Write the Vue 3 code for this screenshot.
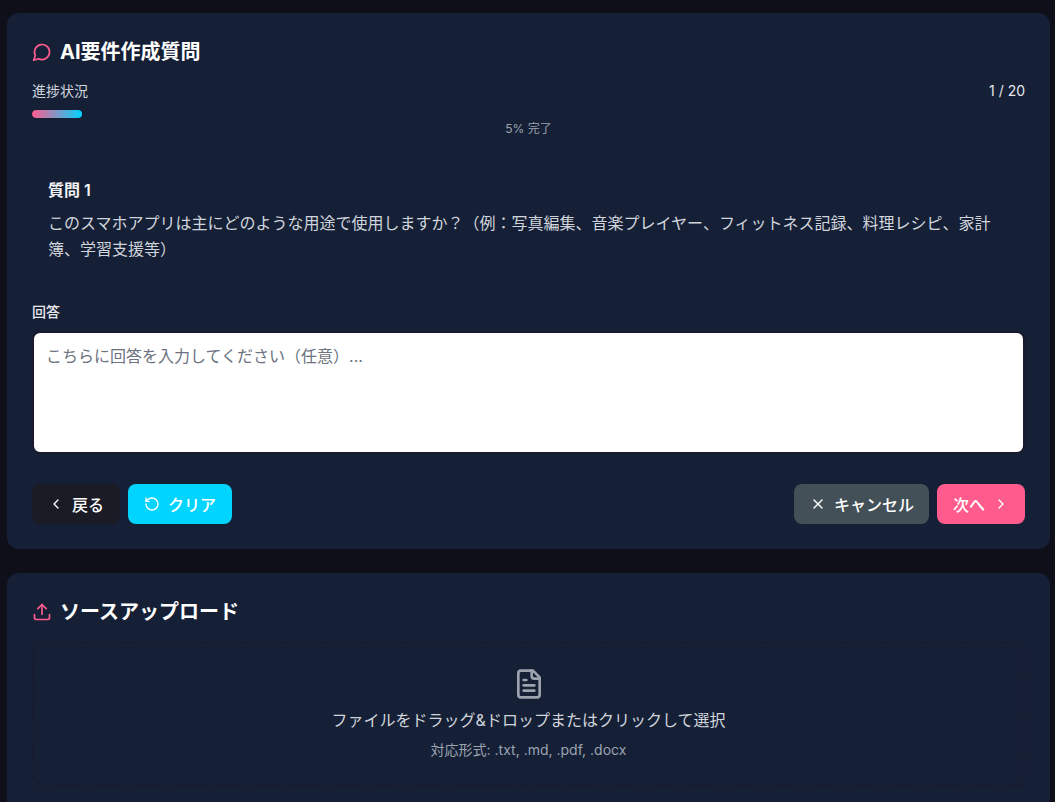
<template>
  <div class="page">
    <section class="card question-card">
      <h2 class="card-title">
        <svg class="title-icon" viewBox="0 0 24 24"><path d="M7.9 20A9 9 0 1 0 4 16.1L2 22Z" /></svg>
        AI要件作成質問
      </h2>
      <div class="progress-head">
        <span class="progress-label">進捗状況</span>
        <span class="progress-count">{{ current }} / {{ total }}</span>
      </div>
      <div class="progress-track">
        <div class="progress-fill" :style="{ width: percent + '%' }"></div>
      </div>
      <p class="progress-note">{{ percent }}% 完了</p>

      <div class="question">
        <h3 class="question-no">質問 {{ current }}</h3>
        <p class="question-text">このスマホアプリは主にどのような用途で使用しますか？（例：写真編集、音楽プレイヤー、フィットネス記録、料理レシピ、家計簿、学習支援等）</p>
      </div>

      <label class="answer-label">回答</label>
      <textarea class="answer" placeholder="こちらに回答を入力してください（任意）..."></textarea>

      <div class="actions">
        <div class="action-group">
          <button class="btn back">
            <svg viewBox="0 0 24 24"><path d="m15 18-6-6 6-6" /></svg>
            戻る
          </button>
          <button class="btn clear">
            <svg viewBox="0 0 24 24"><path d="M3 12a9 9 0 1 0 9-9 9.75 9.75 0 0 0-6.74 2.74L3 8" /><path d="M3 3v5h5" /></svg>
            クリア
          </button>
        </div>
        <div class="action-group">
          <button class="btn cancel">
            <svg viewBox="0 0 24 24"><path d="M18 6 6 18" /><path d="m6 6 12 12" /></svg>
            キャンセル
          </button>
          <button class="btn next">
            次へ
            <svg viewBox="0 0 24 24"><path d="m9 18 6-6-6-6" /></svg>
          </button>
        </div>
      </div>
    </section>

    <section class="card upload-card">
      <h2 class="card-title">
        <svg class="title-icon" viewBox="0 0 24 24"><path d="M21 15v4a2 2 0 0 1-2 2H5a2 2 0 0 1-2-2v-4" /><path d="m17 8-5-5-5 5" /><path d="M12 3v12" /></svg>
        ソースアップロード
      </h2>
      <div class="dropzone">
        <svg class="file-icon" viewBox="0 0 24 24"><path d="M15 2H6a2 2 0 0 0-2 2v16a2 2 0 0 0 2 2h12a2 2 0 0 0 2-2V7Z" /><path d="M14 2v4a2 2 0 0 0 2 2h4" /><path d="M10 9H8" /><path d="M16 13H8" /><path d="M16 17H8" /></svg>
        <p class="drop-text">ファイルをドラッグ&amp;ドロップまたはクリックして選択</p>
        <p class="drop-note">対応形式: .txt, .md, .pdf, .docx</p>
      </div>
    </section>
  </div>
</template>

<script setup>
import { ref } from 'vue'

const current = ref(1)
const total = ref(20)
const percent = ref(5)
</script>

<style>
html, body {
  margin: 0;
  background: #0f0f1a;
  overflow: hidden;
}
</style>

<style scoped>
.page {
  height: 802px;
  overflow: hidden;
  box-sizing: border-box;
  padding: 13px 5px 0 7px;
  display: flex;
  flex-direction: column;
  gap: 24px;
  font-family: Inter, "Noto Sans CJK JP", sans-serif;
  color: #fff;
}

.card {
  background: #152037;
  border-radius: 12px;
  padding: 25px;
  flex-shrink: 0;
}

.card-title {
  display: flex;
  align-items: center;
  gap: 8px;
  margin: 0;
  font-size: 20px;
  line-height: 28px;
  font-weight: 700;
  color: #fff;
}

.title-icon {
  width: 20px;
  height: 20px;
  fill: none;
  stroke: #ff5c8d;
  stroke-width: 2;
  stroke-linecap: round;
  stroke-linejoin: round;
}

.progress-head {
  display: flex;
  justify-content: space-between;
  margin-top: 15px;
  font-size: 14px;
  line-height: 20px;
  color: #d1d5db;
}

.progress-count {
  color: #e5e7eb;
}

.progress-track {
  margin-top: 9px;
  height: 8px;
  border-radius: 4px;
  overflow: hidden;
}

.progress-fill {
  height: 100%;
  border-radius: 4px;
  background: linear-gradient(90deg, #ff5c8d, #00d4ff);
}

.progress-note {
  margin: 3px 0 0;
  text-align: center;
  font-size: 12px;
  line-height: 16px;
  color: #9ca3af;
}

.question {
  padding: 33px 16px 24px;
  margin-top: 8px;
}

.question-no {
  margin: 0 0 8px;
  font-size: 16px;
  line-height: 24px;
  font-weight: 600;
  color: #f3f4f6;
}

.question-text {
  margin: 0;
  font-size: 16px;
  line-height: 26px;
  color: #d1d5db;
}

.answer-label {
  display: block;
  margin-top: 16px;
  margin-bottom: 9px;
  font-size: 14px;
  line-height: 20px;
  font-weight: 500;
  color: #e5e7eb;
}

.answer {
  display: block;
  box-sizing: border-box;
  width: 100%;
  height: 123px;
  padding: 11px 12px;
  background: #fff;
  border: 2px solid #1a1a2e;
  border-radius: 8px;
  resize: none;
  font-family: inherit;
  font-size: 16px;
  line-height: 24px;
  color: #111;
}

.answer::placeholder {
  color: #6b7280;
}

.actions {
  display: flex;
  justify-content: space-between;
  margin-top: 30px;
}

.action-group {
  display: flex;
  gap: 8px;
}

.btn {
  display: flex;
  align-items: center;
  gap: 8px;
  height: 40px;
  padding: 0 16px;
  border: none;
  border-radius: 8px;
  font-family: inherit;
  font-size: 16px;
  font-weight: 500;
  color: #fff;
}

.btn svg {
  width: 16px;
  height: 16px;
  fill: none;
  stroke: currentColor;
  stroke-width: 2;
  stroke-linecap: round;
  stroke-linejoin: round;
}

.btn.back { background: #1b1b26; }
.btn.clear { background: #00d4ff; }
.btn.cancel { background: #435058; padding-right: 15px; }
.btn.next { background: #ff5c8d; }

.dropzone {
  margin-top: 16px;
  height: 144px;
  box-sizing: border-box;
  border: 2px dashed #1a1a2e;
  border-radius: 8px;
  display: flex;
  flex-direction: column;
  align-items: center;
  padding-top: 24px;
}

.file-icon {
  width: 32px;
  height: 32px;
  fill: none;
  stroke: #9ca3af;
  stroke-width: 2;
  stroke-linecap: round;
  stroke-linejoin: round;
}

.drop-text {
  margin: 8px 0 0;
  font-size: 16px;
  line-height: 24px;
  font-weight: 400;
  color: #d1d5db;
}

.drop-note {
  margin: 8px 0 0;
  font-size: 14px;
  line-height: 20px;
  color: #9ca3af;
}
</style>
